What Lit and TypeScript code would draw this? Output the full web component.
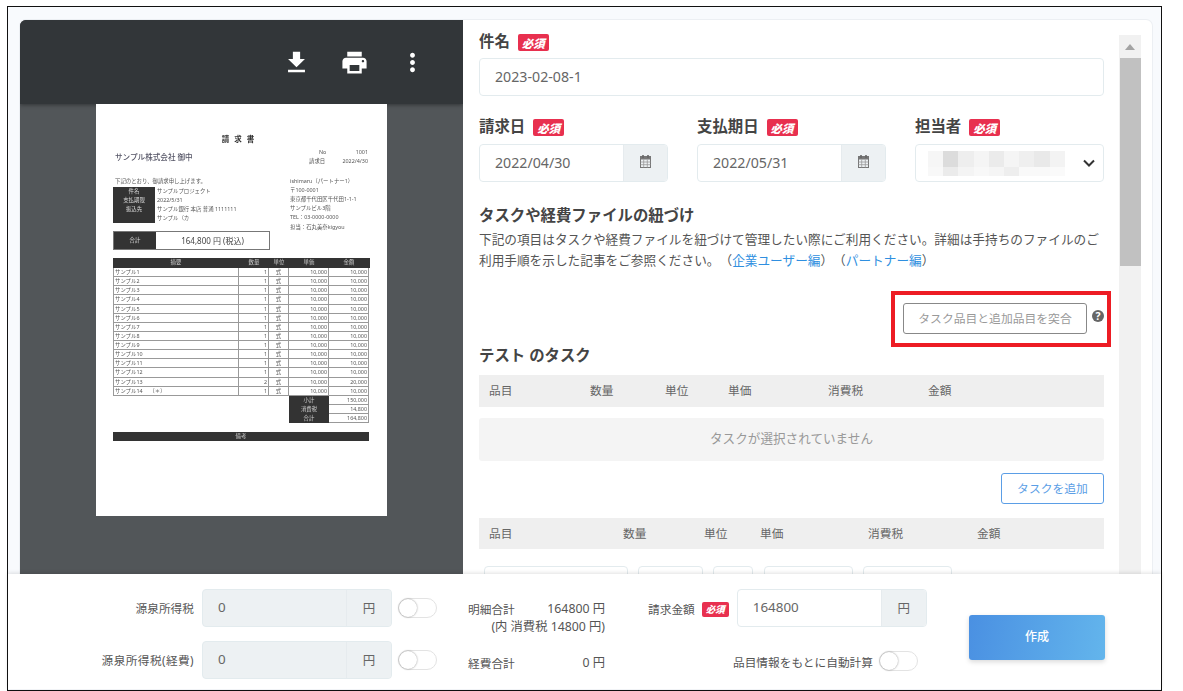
import { LitElement, html, css, svg } from "lit";
import { customElement } from "lit/decorators.js";

const ICONS = {
  download: "M19 9h-4V3H9v6H5l7 7 7-7zM5 18v2h14v-2H5z",
  print: "M19 8H5c-1.66 0-3 1.34-3 3v6h4v4h12v-4h4v-6c0-1.66-1.34-3-3-3zm-3 11H8v-5h8v5zm3-7c-.55 0-1-.45-1-1s.45-1 1-1 1 .45 1 1-.45 1-1 1zm-1-9H6v4h12V3z",
  more: "M12 8c1.1 0 2-.9 2-2s-.9-2-2-2-2 .9-2 2 .9 2 2 2zm0 2c-1.1 0-2 .9-2 2s.9 2 2 2 2-.9 2-2-.9-2-2-2zm0 6c-1.1 0-2 .9-2 2s.9 2 2 2 2-.9 2-2-.9-2-2-2z",
};

const ROWS = [
  ["サンプル1", 1, "10,000"], ["サンプル2", 1, "10,000"], ["サンプル3", 1, "10,000"], ["サンプル4", 1, "10,000"],
  ["サンプル5", 1, "10,000"], ["サンプル6", 1, "10,000"], ["サンプル7", 1, "10,000"], ["サンプル8", 1, "10,000"],
  ["サンプル9", 1, "10,000"], ["サンプル10", 1, "10,000"], ["サンプル11", 1, "10,000"], ["サンプル12", 1, "10,000"],
  ["サンプル13", 2, "20,000"], ["サンプル14 　（＊）", 1, "10,000"],
];

const BLUR = [
  "#f6f6f6", "#dcdcdc", "#eeeeee", "#f5f5f5", "#ebebeb", "#f5f5f5", "#efefef", "#e9e9e9", "#f3f3f3",
  "#f8f8f8", "#ebebeb", "#f4f4f4", "#f8f8f8", "#f5f5f5", "#eeeeee", "#f9f9f9", "#f9f9f9", "#fafafa",
];

const calendar = svg`<svg class="cal" viewBox="0 0 11 13" width="11" height="13"><rect x="0.5" y="1.5" width="10" height="11" fill="none" stroke="#777"/><rect x="0.5" y="1.5" width="10" height="3" fill="#777"/><rect x="2.2" y="0" width="1.6" height="3" fill="#666"/><rect x="7.2" y="0" width="1.6" height="3" fill="#666"/><path d="M0.5 7h10M0.5 9.7h10M3.7 4.5v8M7.3 4.5v8" stroke="#999" stroke-width="0.8"/></svg>`;

@customElement("app-root")
export class AppRoot extends LitElement {
  static styles = css`
    :host { display: block; width: 1183px; height: 691px; background: #fff; overflow: hidden;
      font-family: "Noto Sans", "Noto Sans CJK JP", sans-serif; color: #555; text-spacing-trim: space-all; }
    * { box-sizing: border-box; }
    .frame { margin: 6px 0 0 7px; width: 1155px; height: 685px; border: 1px solid #111; background: #f8fafd;
      display: flex; flex-direction: column; }
    .upper { height: 567px; padding: 13px 9px 0 12px; flex: none; }
    .card { height: 554px; background: #fff; border-radius: 6px 6px 0 0; display: flex; overflow: hidden;
      box-shadow: 0 0 0 1px #eceff3; }

    .pdf { width: 443px; flex: none; background: #525659; overflow: hidden; }
    .bar { height: 84px; background: #323639; box-shadow: 0 1px 4px rgba(0,0,0,.4); display: flex; justify-content: flex-end;
      align-items: center; gap: 29px; padding: 0 36px 0 0; }
    .bar svg { fill: #fff; display: block; }
    .page { width: 291px; height: 412px; margin: 0 0 0 76px; background: #fff; padding: 29px 17px 0 17px;
      color: #555; font-size: 5.4px; line-height: 9px; filter: blur(.45px); white-space: nowrap; }
    .ptitle { text-align: center; font-size: 7.5px; font-weight: 700; letter-spacing: 5px; line-height: 12px; color: #333; margin-right: 2px; }
    .phead { display: flex; justify-content: space-between; padding: 0 2px; height: 25px; margin-top: 6px; }
    .pname { font-size: 7.6px; font-weight: 500; line-height: 12px; color: #556; }
    .pno { width: 67px; margin-top: -3px; line-height: 9px; }
    .pno div { display: flex; justify-content: space-between; padding-left: 18px; }
    .pno div + div { padding-left: 0; }
    .pcols { display: flex; justify-content: space-between; height: 54px; }
    .pleft { width: 170px; }
    .pintro { padding-left: 2px; line-height: 11px; }
    .pinfo { display: flex; }
    .pdark { width: 42px; height: 36px; background: #333; color: #ddd; text-align: center; flex: none; }
    .pvals { padding-left: 2px; }
    .pright { width: 80px; line-height: 9.2px; color: #555; padding-top: .5px; }
    .ptotal { display: flex; width: 157px; height: 19px; border: 1px solid #777; margin-top: 1px; align-items: center; }
    .ptotal b { width: 42px; height: 100%; background: #333; color: #ddd; font-weight: 400; text-align: center; line-height: 17px; }
    .ptotal span { flex: 1; text-align: center; font-size: 8px; color: #444; }
    .ptable { margin-top: 8px; width: 257px; }
    .prow { display: grid; grid-template-columns: 126px 30px 20px 40px 40px; height: 9.14px; line-height: 8px; }
    .prow.h { height: 10px; background: #333; color: #ccc; text-align: center; line-height: 9px; }
    .prow:not(.h) > div { border: 1px solid #999; border-width: 0 1px 1px 0; padding: 0 1px; text-align: right; overflow: hidden; }
    .prow:not(.h) > div:first-child { text-align: left; border-left: 1px solid #999; }
    .prow:not(.h) > div:nth-child(3) { text-align: center; }
    .psum { margin-left: 176px; display: grid; grid-template-columns: 40px 40px; grid-auto-rows: 9px; line-height: 8px; }
    .psum b { background: #333; color: #ccc; font-weight: 400; text-align: center; }
    .psum span { border: 1px solid #999; border-width: 0 1px 1px 0; text-align: right; padding: 0 1px; }
    .pnote { margin-top: 9px; height: 9px; width: 256px; background: #333; color: #ccc; text-align: center; line-height: 9px; }

    .form { width: 656px; flex: none; padding: 14px 15px 0 16px; overflow: hidden; }
    .label { display: flex; align-items: flex-start; gap: 8px; height: 17px; font-size: 15.4px; line-height: 15px; font-weight: 700; color: #444; }
    .badge { display: inline-flex; align-items: center; justify-content: center; width: 31px; height: 17px; border-radius: 2px;
      background: #e8304f; color: #fff; font: italic 900 11.5px "Noto Sans CJK JP", sans-serif; }
    .badge.sm { width: 27px; height: 15px; font-size: 9.5px; }
    .input { height: 38px; border: 1px solid #e3ebee; border-radius: 4px; background: #fff; display: flex; align-items: center;
      font-size: 14.2px; color: #666; }
    .input .v { flex: 1; padding: 0 0 1px 15px; }
    .input .add { height: 100%; display: flex; align-items: center; justify-content: center; background: #edf1f3; border-left: 1px solid #e6ebee; border-radius: 0 3px 3px 0; }
    .full { margin: 7px 0 23px; }
    .three { display: grid; grid-template-columns: 189px 189px 189px; column-gap: 29px; }
    .three .input { margin-top: 8px; }
    .three .add { width: 44px; padding-bottom: 3px; }
    .cal { display: block; }
    .sel { justify-content: space-between; padding: 0 8px 0 12px; }
    .mosaic { display: grid; grid-template-columns: repeat(9, 15.2px); grid-template-rows: 16px 9px; }
    .mosaic i { display: block; }
    h3 { margin: 0; font-size: 15.4px; font-weight: 700; line-height: 20px; color: #444; }
    .h1 { margin-top: 24px; }
    .desc { margin: 3px 0 0; font-size: 12.67px; line-height: 21px; color: #555; width: 630px; }
    .desc div { white-space: nowrap; }
    .desc a { color: #2f8fe0; text-decoration: none; }
    .match { position: relative; margin-top: 32px; height: 31px; display: flex; justify-content: flex-end; align-items: center; gap: 5px; }
    .match button { width: 184px; height: 31px; background: #fff; border: 1px solid #888; border-radius: 3px; color: #999;
      font: 11.8px "Noto Sans CJK JP", sans-serif; padding: 0 0 2px; }
    .help { width: 12px; height: 12px; border-radius: 50%; background: #666; color: #fff; font-size: 10.5px; font-weight: 700;
      line-height: 12px; text-align: center; margin-top: -5px; }
    .red { position: absolute; left: 412px; top: -12px; width: 220px; height: 56px; border: 4px solid #ed1c24; pointer-events: none; }
    .h2 { margin-top: 12px; }
    .thead { display: grid; align-items: center; background: #efefef; height: 32px; padding: 0 0 3px 10px; font-size: 11.7px; color: #666; }
    .t1 { grid-template-columns: 101px 75px 63px 100px 100px 1fr; margin-top: 9px; }
    .t2 { grid-template-columns: 134px 81px 56px 108px 109px 1fr; margin-top: 14px; height: 31px; }
    .empty { margin-top: 11px; height: 43px; padding-bottom: 5px; background: #f4f4f4; border-radius: 3px; display: flex; align-items: center;
      justify-content: center; font-size: 12.6px; color: #999; }
    .addrow { margin-top: 12px; display: flex; justify-content: flex-end; }
    .addrow button { width: 103px; height: 31px; background: #fff; border: 1px solid #5b9ee6; border-radius: 3px; color: #5b9ee6;
      font: 11.8px "Noto Sans CJK JP", sans-serif; padding: 0 0 2px; }
    .cells { display: flex; margin: 17px 0 0 5px; }
    .cells i { display: block; height: 30px; border: 1px solid #e3ebee; border-radius: 4px; }

    .scroll { width: 22px; margin: 15px 0 0 0; background: #f1f1f1; flex: none; display: flex; flex-direction: column; align-items: center; }
    .up { height: 23px; display: flex; align-items: center; justify-content: center; }
    .up::before { content: ""; border: 5.5px solid transparent; border-top: 0; border-bottom: 6px solid #a3a3a3; }
    .thumb { width: 21px; height: 208px; background: #c1c1c1; }

    .footer { flex: none; height: 115px; background: #fff; box-shadow: 0 -1px 4px rgba(0,0,0,.12); position: relative;
      display: flex; padding: 15px 0 0 0; font-size: 11.7px; color: #555; }
    .taxcol { display: grid; grid-template-columns: 186px 190px 39px; column-gap: 8px; row-gap: 14px; align-items: center; align-content: start; width: 429px; flex: none; }
    .taxcol .r { text-align: right; padding-bottom: 2px; white-space: nowrap; }
    .taxcol .wide { letter-spacing: .4px; }
    .taxcol .tg { margin-left: -2px; }
    .ig { height: 38px; display: flex; border: 1px solid #e3ebee; border-radius: 4px; align-items: center; font-size: 13.4px; color: #666; }
    .ig .v { flex: 1; padding: 0 0 2px 15px; }
    .ig .u { width: 45px; height: 100%; display: flex; align-items: center; justify-content: center; background: #edf1f3; padding-bottom: 2px;
      border-left: 1px solid #e6ebee; font-size: 12.5px; border-radius: 0 3px 3px 0; }
    .ig.dis { background: #edf1f3; }
    .toggle { display: block; width: 39px; height: 20px; border: 1px solid #e3e3e3; border-radius: 10px; background: #fff; position: relative; }
    .toggle::before { content: ""; position: absolute; left: 0; top: 0; width: 18px; height: 18px; border-radius: 50%; background: #fff;
      box-shadow: 0 0 2px rgba(0,0,0,.45); }
    .sums { width: 137px; margin-left: 31px; flex: none; padding-top: 11px; line-height: 18px; }
    .sums div { display: flex; justify-content: space-between; }
    .sums .end { justify-content: flex-end; }
    .sums .exp { margin-top: 18px; }
    .num { font-size: 12.3px; }
    .bill { width: 279px; margin-left: 43px; flex: none; }
    .billrow { display: flex; align-items: center; height: 38px; white-space: nowrap; }
    .billrow .badge { margin: 2px 8px 0 7px; flex: none; }
    .billrow .ig { width: 190px; flex: none; }
    .auto { display: flex; justify-content: flex-end; align-items: center; gap: 6px; margin: 24px 9px 0 0; height: 20px; white-space: nowrap; }
    .create { width: 136px; height: 45px; margin: 26px 0 0 42px; border: 0; border-radius: 3px; color: #fff; font: 500 12px "Noto Sans CJK JP", sans-serif;
      padding: 0 0 4px; background: linear-gradient(100deg, #4a90e2, #63b5ec); box-shadow: 0 2px 5px rgba(0,0,0,.15); }
  `;

  private icon(d: string) {
    return html`<svg width="29" height="29" viewBox="0 0 24 24"><path d=${d}></path></svg>`;
  }

  private page() {
    return html`<div class="page">
      <div class="ptitle">請求書</div>
      <div class="phead">
        <div class="pname">サンプル株式会社 御中</div>
        <div class="pno"><div><span>No</span><span>1001</span></div><div><span style="margin-left:8px">請求日</span><span>2022/4/30</span></div></div>
      </div>
      <div class="pcols">
        <div class="pleft">
          <div class="pintro">下記のとおり、御請求申し上げます。</div>
          <div class="pinfo">
            <div class="pdark"><div>件名</div><div>支払期限</div><div>振込先</div></div>
            <div class="pvals"><div>サンプルプロジェクト</div><div>2022/5/31</div><div>サンプル銀行 本店 普通 1111111</div><div>サンプル（カ</div></div>
          </div>
        </div>
        <div class="pright">
          <div>ishimaru（パートナー1）</div><div>〒100-0001</div><div>東京都千代田区千代田1-1-1</div><div>サンプルビル3階</div><div>TEL：03-0000-0000</div><div>担当：石丸美奈kigyou</div>
        </div>
      </div>
      <div class="ptotal"><b>合計</b><span>164,800 円 (税込)</span></div>
      <div class="ptable">
        <div class="prow h"><div>摘要</div><div>数量</div><div>単位</div><div>単価</div><div>金額</div></div>
        ${ROWS.map((r) => html`<div class="prow"><div>${r[0]}</div><div>${r[1]}</div><div>式</div><div>10,000</div><div>${r[2]}</div></div>`)}
      </div>
      <div class="psum"><b>小計</b><span>150,000</span><b>消費税</b><span>14,800</span><b>合計</b><span>164,800</span></div>
      <div class="pnote">備考</div>
    </div>`;
  }

  render() {
    const cols = ["品目", "数量", "単位", "単価", "消費税", "金額"];
    return html`<div class="frame">
      <div class="upper"><div class="card">
        <div class="pdf">
          <div class="bar">${this.icon(ICONS.download)}${this.icon(ICONS.print)}${this.icon(ICONS.more)}</div>
          ${this.page()}
        </div>
        <div class="form">
          <div class="label">件名 <span class="badge">必須</span></div>
          <div class="input full"><span class="v">2023-02-08-1</span></div>
          <div class="three">
            <div><div class="label">請求日 <span class="badge">必須</span></div>
              <div class="input"><span class="v">2022/04/30</span><span class="add">${calendar}</span></div></div>
            <div><div class="label">支払期日 <span class="badge">必須</span></div>
              <div class="input"><span class="v">2022/05/31</span><span class="add">${calendar}</span></div></div>
            <div><div class="label">担当者 <span class="badge">必須</span></div>
              <div class="input sel">
                <div class="mosaic">${BLUR.map((c) => html`<i style="background:${c}"></i>`)}</div>
                <svg width="12" height="8" viewBox="0 0 12 8"><path d="M1 1.5l5 5 5-5" fill="none" stroke="#333" stroke-width="2"/></svg>
              </div></div>
          </div>
          <h3 class="h1">タスクや経費ファイルの紐づけ</h3>
          <div class="desc"><div>下記の項目はタスクや経費ファイルを紐づけて管理したい際にご利用ください。詳細は手持ちのファイルのご</div><div><span>利用手順を示した記事をご参照ください。（</span><a>企業ユーザー編</a><span>）（</span><a>パートナー編</a><span>）</span></div></div>
          <div class="match"><button>タスク品目と追加品目を突合</button><span class="help">?</span><div class="red"></div></div>
          <h3 class="h2">テスト のタスク</h3>
          <div class="thead t1">${cols.map((c) => html`<span>${c}</span>`)}</div>
          <div class="empty">タスクが選択されていません</div>
          <div class="addrow"><button>タスクを追加</button></div>
          <div class="thead t2">${cols.map((c) => html`<span>${c}</span>`)}</div>
          <div class="cells">
            <i style="width:144px;margin-right:10px"></i><i style="width:65px;margin-right:10px"></i><i style="width:40px;margin-right:11px"></i><i style="width:89px;margin-right:10px"></i><i style="width:89px"></i>
          </div>
        </div>
        <div class="scroll"><div class="up"></div><div class="thumb"></div></div>
      </div></div>
      <div class="footer">
        <div class="taxcol">
          <span class="r">源泉所得税</span>
          <div class="ig dis"><span class="v">0</span><span class="u">円</span></div>
          <span class="toggle tg"></span>
          <span class="r wide">源泉所得税(経費)</span>
          <div class="ig dis"><span class="v">0</span><span class="u">円</span></div>
          <span class="toggle tg"></span>
        </div>
        <div class="sums">
          <div><span>明細合計</span><span class="num">164800 円</span></div>
          <div class="end num">(内 消費税 14800 円)</div>
          <div class="exp"><span>経費合計</span><span class="num">0 円</span></div>
        </div>
        <div class="bill">
          <div class="billrow"><span>請求金額</span><span class="badge sm">必須</span>
            <div class="ig"><span class="v">164800</span><span class="u">円</span></div></div>
          <div class="auto"><span>品目情報をもとに自動計算</span><span class="toggle"></span></div>
        </div>
        <button class="create">作成</button>
      </div>
    </div>`;
  }
}
